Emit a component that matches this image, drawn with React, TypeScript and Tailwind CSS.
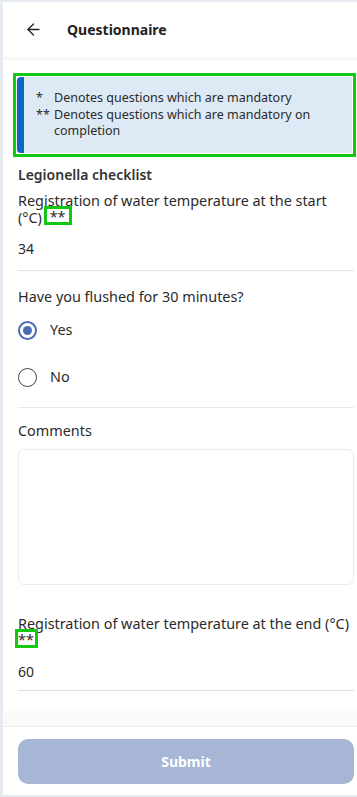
import { ArrowLeft } from 'lucide-react';

const FONT = { fontFamily: '"Noto Sans", "Open Sans", sans-serif' };

function Radio({ label, checked }: { label: string; checked?: boolean }) {
  return (
    <div className="flex items-center gap-[13px] h-[47px]">
      <span
        className={
          checked
            ? 'w-[19px] h-[19px] rounded-full border-2 border-[#4a6db3] flex items-center justify-center'
            : 'w-[19px] h-[19px] rounded-full border-[1.5px] border-[#444]'
        }
      >
        {checked && <span className="w-[9px] h-[9px] rounded-full bg-[#4a6db3]" />}
      </span>
      <span className="text-[14.4px] text-[#2b2b2b]">{label}</span>
    </div>
  );
}

// "**" marker, outlined as in the reference
function Marker({ className }: { className?: string }) {
  return (
    <span
      className={
        'inline-block h-[13px] leading-[15px] align-[1px] outline-[3px] outline-[#13c813] ' +
        (className ?? '')
      }
    >
      **
    </span>
  );
}

export default function App() {
  return (
    <div
      className="w-[357px] h-[797px] bg-[#e6ebf2] pl-[3px] pt-[2px] pb-[2px] overflow-hidden"
      style={FONT}
    >
      <div className="h-full bg-white flex flex-col">
        {/* Header */}
        <div className="h-[55px] flex items-center shrink-0">
          <ArrowLeft className="w-[19px] h-[19px] ml-[21px] text-[#222]" strokeWidth={1.6} />
          <span className="ml-[24px] text-[14px] font-bold text-[#222]">Questionnaire</span>
        </div>
        <div className="h-[5px] bg-gradient-to-b from-[#f4f4f4] to-white" />

        <div className="flex-1 flex flex-col pl-[15px]">
          {/* Legend */}
          <div className="mt-[15px] outline-[3px] outline-[#13c813] outline-offset-[1px] -ml-[1px] w-[335px]">
            <div className="flex rounded-l-[4px] overflow-hidden bg-[#dde9f5]">
              <div className="w-[7px] bg-[#0e68bd] shrink-0" />
              <div className="py-[13px] pl-[12px] pr-[8px] text-[12.5px] leading-[16.5px] text-[#2b2b2b]">
                <div className="flex">
                  <span className="w-[18px] shrink-0">*</span>
                  <span>Denotes questions which are mandatory</span>
                </div>
                <div className="flex">
                  <span className="w-[18px] shrink-0">**</span>
                  <span>Denotes questions which are mandatory on completion</span>
                </div>
              </div>
            </div>
          </div>

          <div className="pr-[3px] mt-[12px]">
            <div className="text-[14px] font-semibold text-[#333] leading-[20px]">
              Legionella checklist
            </div>

            {/* Start temperature */}
            <div className="mt-[7px] text-[14.4px] leading-[17px] text-[#2b2b2b]">
              Registration of water temperature at the start
              <br />
              (°C) <Marker className="px-[3px] ml-[1px]" />
            </div>
            <div className="mt-[13px] text-[14px] text-[#2b2b2b] leading-[20px]">34</div>
            <div className="mt-[11px] border-b border-[#e3e3e3]" />

            <div className="mt-[16px] text-[14.4px] leading-[20px] text-[#2b2b2b]">
              Have you flushed for 30 minutes?
            </div>
            <div>
              <Radio label="Yes" checked />
              <Radio label="No" />
            </div>
            <div className="mt-[6px] border-b border-[#e8e8e8]" />

            <div className="mt-[13px] text-[14.4px] leading-[20px] text-[#2b2b2b]">Comments</div>
            <div className="mt-[8px] h-[136px] rounded-[6px] border border-[#ececec]" />

            {/* End temperature */}
            <div className="mt-[30px] -mr-[3px] text-[14.4px] leading-[17px] text-[#2b2b2b]">
              Registration of water temperature at the end (°C)
              <br />
              <Marker className="pr-[1px]" />
            </div>
            <div className="mt-[13px] text-[14px] text-[#2b2b2b] leading-[20px]">60</div>
            <div className="mt-[8px] border-b border-[#dedede]" />
          </div>

          <div className="mt-[20px] -ml-[15px] h-[16px] bg-[#fafafa] border-b border-[#ececec]" />

          <div className="pr-[3px] mt-[12px]">
            <button className="w-full h-[45px] rounded-[10px] bg-[#a6b6d4] text-white text-[14px] font-bold">
              Submit
            </button>
          </div>
        </div>
      </div>
    </div>
  );
}
